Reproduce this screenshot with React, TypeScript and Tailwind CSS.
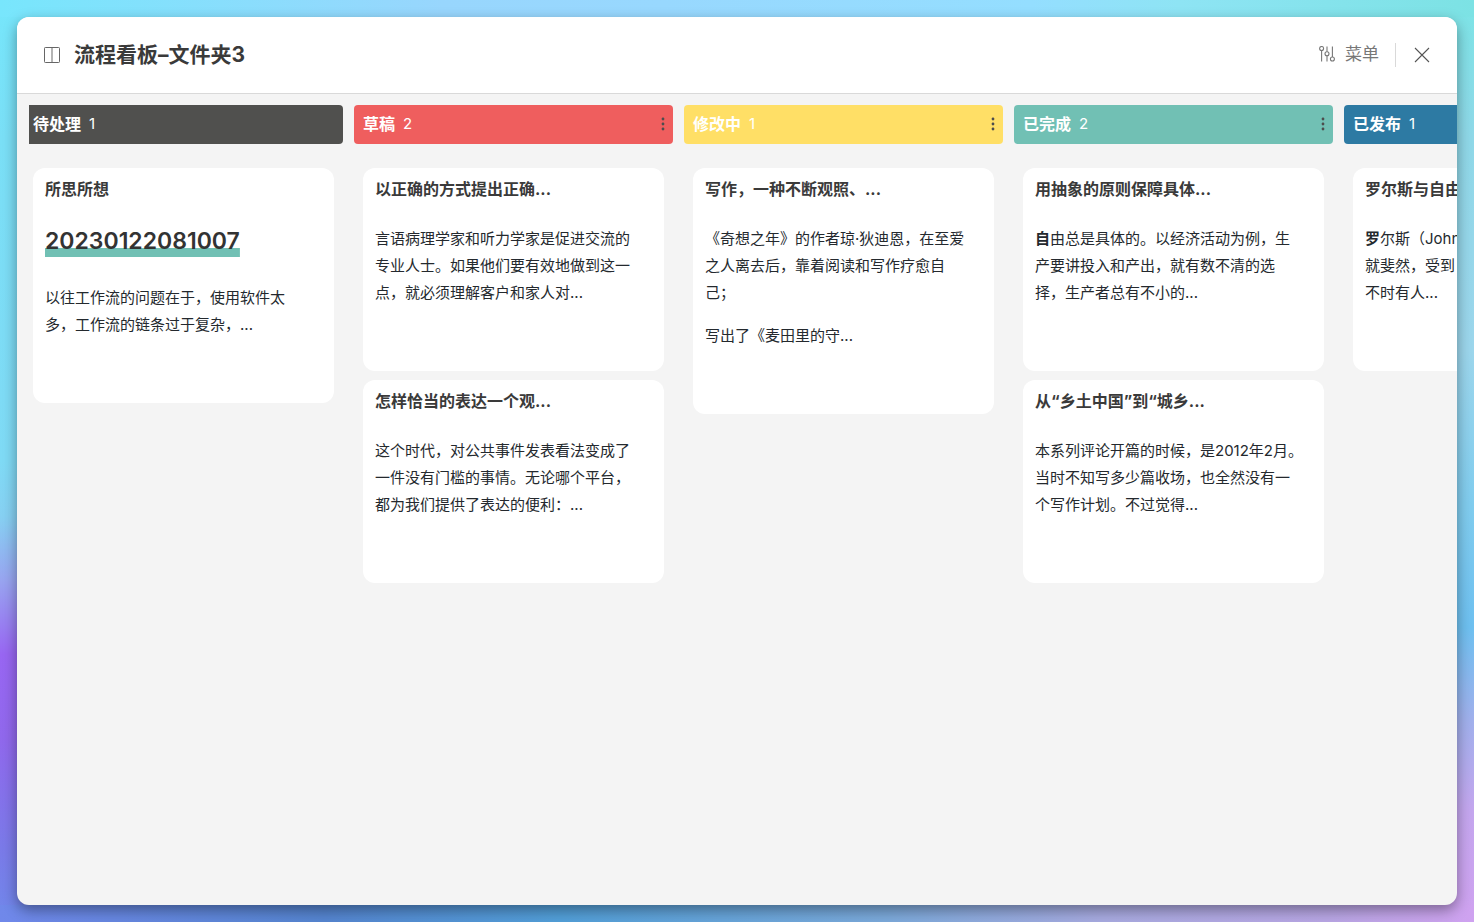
type Card = {
  title: string;
  heading?: string;
  paragraphs: string[][];
  dropCap?: boolean;
};

type Column = {
  name: string;
  count: number;
  bar: string;
  cards: Card[];
};

const columns: Column[] = [
  {
    name: '待处理',
    count: 1,
    bar: 'bg-[#50504e]',
    cards: [
      {
        title: '所思所想',
        heading: '20230122081007',
        paragraphs: [['以往工作流的问题在于，使用软件太', '多，工作流的链条过于复杂，...']],
      },
    ],
  },
  {
    name: '草稿',
    count: 2,
    bar: 'bg-[#ef5e5e]',
    cards: [
      {
        title: '以正确的方式提出正确...',
        paragraphs: [
          ['言语病理学家和听力学家是促进交流的', '专业人士。如果他们要有效地做到这一', '点，就必须理解客户和家人对...'],
        ],
      },
      {
        title: '怎样恰当的表达一个观...',
        paragraphs: [
          ['这个时代，对公共事件发表看法变成了', '一件没有门槛的事情。无论哪个平台，', '都为我们提供了表达的便利：...'],
        ],
      },
    ],
  },
  {
    name: '修改中',
    count: 1,
    bar: 'bg-[#ffdf66]',
    cards: [
      {
        title: '写作，一种不断观照、...',
        paragraphs: [
          ['《奇想之年》的作者琼·狄迪恩，在至爱', '之人离去后，靠着阅读和写作疗愈自', '己；'],
          ['写出了《麦田里的守...'],
        ],
      },
    ],
  },
  {
    name: '已完成',
    count: 2,
    bar: 'bg-[#71c0b4]',
    cards: [
      {
        title: '用抽象的原则保障具体...',
        dropCap: true,
        paragraphs: [
          ['自由总是具体的。以经济活动为例，生', '产要讲投入和产出，就有数不清的选', '择，生产者总有不小的...'],
        ],
      },
      {
        title: '从“乡土中国”到“城乡...',
        paragraphs: [
          ['本系列评论开篇的时候，是2012年2月。', '当时不知写多少篇收场，也全然没有一', '个写作计划。不过觉得...'],
        ],
      },
    ],
  },
  {
    name: '已发布',
    count: 1,
    bar: 'bg-[#2d7aa3]',
    cards: [
      {
        title: '罗尔斯与自由...',
        dropCap: true,
        paragraphs: [['罗尔斯（John', '就斐然，受到', '不时有人...']],
      },
    ],
  },
];

function BoardIcon() {
  return (
    <svg className="size-4" viewBox="0 0 16 16" fill="none" aria-hidden="true">
      <path d="M8 1v14" stroke="#b4b4b4" strokeWidth="2" />
      <rect x="0.5" y="0.5" width="15" height="15" rx="0.8" stroke="#666" />
    </svg>
  );
}

function SlidersIcon() {
  return (
    <svg className="size-4" viewBox="0 0 16 16" fill="none" stroke="#777" strokeWidth="1.1" aria-hidden="true">
      <circle cx="2.6" cy="2.5" r="2" />
      <path d="M2.6 4.5V15.5" />
      <circle cx="8" cy="7.7" r="2" />
      <path d="M8 0.5V5.7M8 9.7V15.5" />
      <circle cx="13.4" cy="13" r="2" />
      <path d="M13.4 0.5V11" />
    </svg>
  );
}

function CloseIcon() {
  return (
    <svg className="size-4" viewBox="0 0 16 16" fill="none" stroke="#555" strokeWidth="1.1" aria-hidden="true">
      <path d="M1 1L15 15M15 1L1 15" />
    </svg>
  );
}

function KebabIcon() {
  return (
    <svg className="h-4 w-1" viewBox="0 0 4 16" fill="#4d4d4d" aria-hidden="true">
      <circle cx="2" cy="3" r="1.4" />
      <circle cx="2" cy="8" r="1.4" />
      <circle cx="2" cy="13" r="1.4" />
    </svg>
  );
}

function NoteCard({ card }: { card: Card }) {
  return (
    <article className="rounded-xl bg-white px-3 pt-2 pb-[65px]">
      <h3 className="text-base leading-[26px] font-bold whitespace-nowrap text-[#3a3a3a]">{card.title}</h3>
      <div className="mt-[23px] text-[15px] leading-[27px] text-[#24292e]">
        {card.heading && (
          <h4 className="mb-[27px] flex text-[23px] leading-8 font-semibold text-[#333]">
            <span className="bg-[linear-gradient(#71c0b4,#71c0b4)] bg-[size:100%_9px] bg-bottom bg-no-repeat">
              {card.heading}
            </span>
          </h4>
        )}
        <div className="flex flex-col gap-4">
          {card.paragraphs.map((lines) => (
            <p
              key={lines[0]}
              className={card.dropCap ? 'whitespace-pre first-letter:font-bold' : 'whitespace-pre'}
            >
              {lines.join('\n')}
            </p>
          ))}
        </div>
      </div>
    </article>
  );
}

function BoardColumn({ column, first }: { column: Column; first: boolean }) {
  return (
    <section className={first ? 'w-[314px] shrink-0' : 'w-[319px] shrink-0'}>
      <header
        className={`flex h-[39px] items-center justify-between pr-2 pb-0.5 text-white ${
          first ? 'rounded-r pl-1' : 'rounded pl-[9px]'
        } ${column.bar}`}
      >
        <div className="flex items-center gap-2 leading-6">
          <h2 className="text-base font-bold">{column.name}</h2>
          <span className="text-[15px]">{column.count}</span>
        </div>
        {!first && (
          <button type="button" aria-label={`${column.name}选项`} className="cursor-pointer">
            <KebabIcon />
          </button>
        )}
      </header>
      <div className={`mt-6 flex flex-col gap-[9px] pr-[9px] ${first ? 'pl-1' : 'pl-[9px]'}`}>
        {column.cards.map((card) => (
          <NoteCard key={card.title} card={card} />
        ))}
      </div>
    </section>
  );
}

export default function App() {
  return (
    <div className="flex min-h-screen bg-[linear-gradient(90deg,#78e6fc,#98d6fd_30%,#98d8fe_45%,#94deff_70%,#8ee4f4_80%,#7ce2e4),linear-gradient(90deg,#7088ea,#5585d0_22%,#529fd8_38%,#7ba9da_60%,#a8aae0_75%,#b8a6e4_90%,#cfa2f0),linear-gradient(#76e6fb,#7adff6_15%,#7fdaf5_50%,#86d0f2_56%,#98a4f0_63%,#9866f2_71%,#9068ec_80%,#7a7ae8_92%,#7088ea),linear-gradient(#7ce4e6,#8fd8e8_15%,#9cd6ec_38%,#80ccee_55%,#6ec0f0_68%,#a0b0ec_78%,#c4a6ee_88%,#cfa2f0)] bg-[size:100%_17px,100%_17px,50%_100%,50%_100%] bg-[position:top,bottom,left,right] bg-no-repeat p-[17px] font-[Inter,'Noto_Sans_CJK_SC',sans-serif]">
      <main className="flex min-w-0 flex-1 flex-col overflow-hidden rounded-xl bg-[#f4f4f4] shadow-[0_5px_14px_rgba(0,0,0,0.38)]">
        <header className="flex h-[77px] shrink-0 items-center justify-between border-b border-[#d9d9d9] bg-white px-[27px]">
          <div className="flex items-center gap-[14px]">
            <BoardIcon />
            <h1 className="text-[21px] leading-7 font-bold text-[#3a3a3a]">流程看板–文件夹3</h1>
          </div>
          <div className="flex items-center">
            <button
              type="button"
              className="flex cursor-pointer items-center gap-[10px] pb-[3px] text-[17px] leading-6 text-[#777]"
            >
              <SlidersIcon />
              菜单
            </button>
            <span className="ml-4 h-6 w-px bg-[#d9d9d9]" />
            <button type="button" aria-label="关闭" className="ml-[18px] cursor-pointer">
              <CloseIcon />
            </button>
          </div>
        </header>
        <div className="flex flex-1 gap-[11px] overflow-x-auto overflow-y-hidden pt-[11px] pl-3 [scrollbar-width:none]">
          {columns.map((column, index) => (
            <BoardColumn key={column.name} column={column} first={index === 0} />
          ))}
        </div>
      </main>
    </div>
  );
}
